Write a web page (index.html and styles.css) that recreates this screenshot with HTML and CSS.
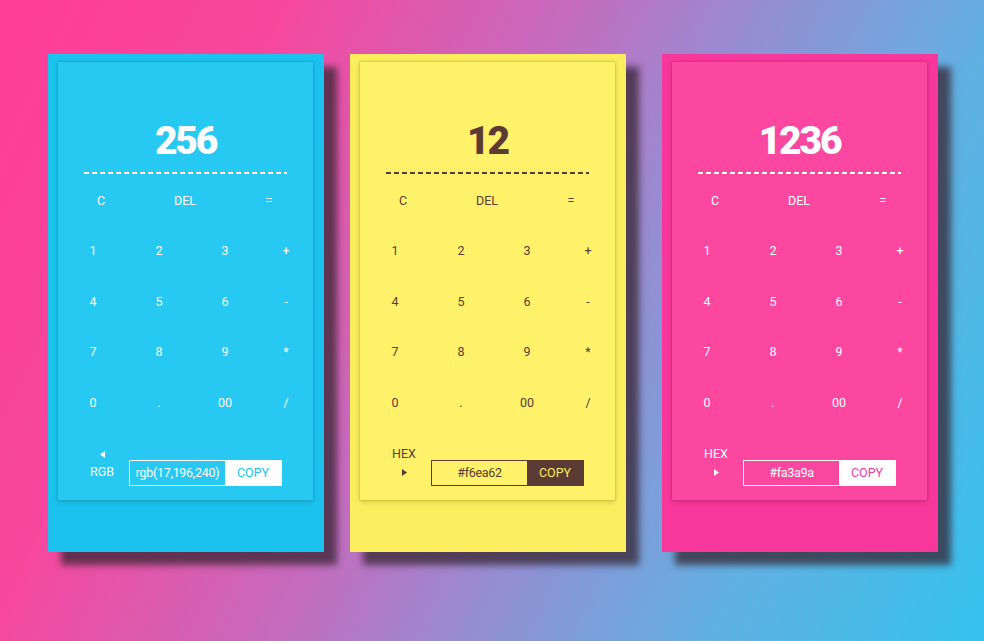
FILE: index.html
```html
<!DOCTYPE html>
<html>
<head>
<meta charset="utf-8">
<link rel="stylesheet" href="styles.css">
</head>
<body>
<div class="stage">
  <div class="card card-blue">
    <div class="panel">
      <div class="display">256</div>
      <div class="dash"></div>
      <div class="fn-row"><span>C</span><span>DEL</span><span>=</span></div>
      <div class="keys">
        <span>1</span><span>2</span><span>3</span><span>+</span>
        <span>4</span><span>5</span><span>6</span><span>-</span>
        <span>7</span><span>8</span><span>9</span><span>*</span>
        <span>0</span><span>.</span><span>00</span><span>/</span>
      </div>
      <div class="bottom">
        <div class="mode">
          <span class="tri"><svg width="5" height="7" viewBox="0 0 5 7"><path d="M5 0 L0 3.5 L5 7 Z" fill="currentColor"/></svg></span>
          <span>RGB</span>
        </div>
        <div class="field">
          <span class="value">rgb(17,196,240)</span>
          <span class="copy">COPY</span>
        </div>
      </div>
    </div>
  </div>

  <div class="card card-yellow">
    <div class="panel">
      <div class="display">12</div>
      <div class="dash"></div>
      <div class="fn-row"><span>C</span><span>DEL</span><span>=</span></div>
      <div class="keys">
        <span>1</span><span>2</span><span>3</span><span>+</span>
        <span>4</span><span>5</span><span>6</span><span>-</span>
        <span>7</span><span>8</span><span>9</span><span>*</span>
        <span>0</span><span>.</span><span>00</span><span>/</span>
      </div>
      <div class="bottom">
        <div class="mode">
          <span>HEX</span>
          <span class="tri"><svg width="5" height="7" viewBox="0 0 5 7"><path d="M0 0 L5 3.5 L0 7 Z" fill="currentColor"/></svg></span>
        </div>
        <div class="field">
          <span class="value">#f6ea62</span>
          <span class="copy">COPY</span>
        </div>
      </div>
    </div>
  </div>

  <div class="card card-pink">
    <div class="panel">
      <div class="display">1236</div>
      <div class="dash"></div>
      <div class="fn-row"><span>C</span><span>DEL</span><span>=</span></div>
      <div class="keys">
        <span>1</span><span>2</span><span>3</span><span>+</span>
        <span>4</span><span>5</span><span>6</span><span>-</span>
        <span>7</span><span>8</span><span>9</span><span>*</span>
        <span>0</span><span>.</span><span>00</span><span>/</span>
      </div>
      <div class="bottom">
        <div class="mode">
          <span>HEX</span>
          <span class="tri"><svg width="5" height="7" viewBox="0 0 5 7"><path d="M0 0 L5 3.5 L0 7 Z" fill="currentColor"/></svg></span>
        </div>
        <div class="field">
          <span class="value">#fa3a9a</span>
          <span class="copy">COPY</span>
        </div>
      </div>
    </div>
  </div>
</div>
</body>
</html>
```

FILE: styles.css
```css
html, body {
  margin: 0;
  padding: 0;
}

body {
  width: 984px;
  height: 641px;
  overflow: hidden;
  background: linear-gradient(115deg, #ff3d98 0%, #f7479d 22%, #c46cbe 45%, #9a8ad0 58%, #62b0e2 78%, #35c3ee 100%);
  font-family: "Roboto", "DejaVu Sans", sans-serif;
}

.stage {
  display: flex;
  padding: 54px 0 0 48px;
  gap: 26px;
}

.card {
  box-sizing: border-box;
  width: 276px;
  height: 498px;
  padding: 8px 11px 0 10px;
  box-shadow: 13px 13px 7px rgba(55, 38, 50, 0.75);
}

.card-pink {
  margin-left: 10px;
}

.panel {
  height: 438px;
  box-sizing: border-box;
  padding-top: 60px;
  box-shadow: 0 0 0 1px rgba(0, 0, 0, 0.03), 0 0 4px rgba(0, 0, 0, 0.16), 0 3px 5px rgba(0, 0, 0, 0.08);
}

.display {
  font-family: "Roboto", "DejaVu Sans", sans-serif;
  font-weight: 900;
  font-size: 39px;
  line-height: 39px;
  text-align: center;
  letter-spacing: -2.2px;
}

.dash {
  height: 2px;
  margin: 11px 26px 1px 26px;
  background: repeating-linear-gradient(90deg, currentColor 0 5px, transparent 5px 8px);
}

.fn-row {
  display: grid;
  grid-template-columns: repeat(3, 84px);
  padding-left: 1px;
  height: 50.5px;
  align-items: center;
  justify-items: center;
  font-size: 12.5px;
}

.keys {
  display: grid;
  grid-template-columns: 66px 66px 66px 56px;
  grid-auto-rows: 50.5px;
  padding-left: 2px;
  align-items: center;
  justify-items: center;
  font-size: 12.5px;
}

.bottom {
  display: flex;
  align-items: flex-start;
  margin-top: 17.5px;
}

.mode {
  width: 36px;
  margin-left: 26px;
  display: flex;
  flex-direction: column;
  align-items: center;
  font-size: 12.5px;
}

.mode > span {
  height: 18px;
  line-height: 18px;
  display: flex;
  align-items: center;
}

.field {
  display: flex;
  margin-left: 9px;
  margin-top: 15px;
  height: 26px;
  box-sizing: border-box;
  border: 1px solid currentColor;
  font-size: 12.5px;
}

.value {
  width: 95px;
  line-height: 24px;
  text-align: center;
  letter-spacing: -0.3px;
}

.copy {
  width: 56px;
  line-height: 24px;
  text-align: center;
}

/* Blue */
.card-blue {
  background: #1bc2ed;
  color: #ffffff;
}
.card-blue .panel {
  background: #27c8f1;
}
.card-blue .copy {
  background: #ffffff;
  color: #22c2ee;
}

/* Yellow */
.card-yellow {
  background: #fbee5e;
  color: #5b3b35;
}
.card-yellow .panel {
  background: #fdf26a;
  box-shadow: 0 0 0 1px rgba(170, 150, 0, 0.12), 0 0 4px rgba(120, 100, 0, 0.3), 0 3px 5px rgba(0, 0, 0, 0.08);
}
.card-yellow .copy {
  background: #5b3b35;
  color: #fbee5e;
}

/* Pink */
.card-pink {
  background: #f7379a;
  color: #ffffff;
}
.card-pink .panel {
  background: #fc47a0;
}
.card-pink .copy {
  background: #ffffff;
  color: #f53c9a;
}
```
